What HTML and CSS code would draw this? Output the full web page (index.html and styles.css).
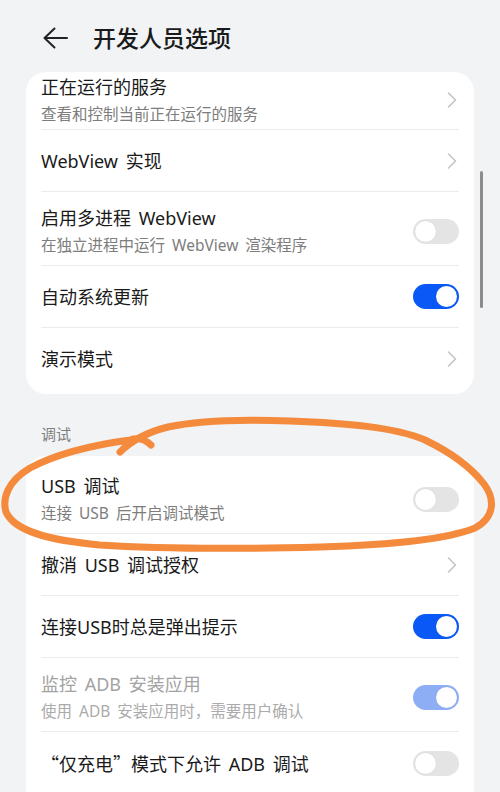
FILE: index.html
```html
<!DOCTYPE html>
<html lang="zh-CN">
<head>
<meta charset="utf-8">
<title>开发人员选项</title>
<link rel="stylesheet" href="styles.css">
</head>
<body>
<div class="page">
  <header class="header">
    <svg class="back" width="26" height="22" viewBox="0 0 26 22"><path d="M2.5 11 H25 M12.5 1.5 L2.5 11 L12.5 20.5" fill="none" stroke="#222" stroke-width="2" stroke-linecap="round" stroke-linejoin="round"/></svg>
    <h1 class="title">开发人员选项</h1>
  </header>

  <section class="card card-top">
    <div class="row row-double row-first">
      <div class="text"><div class="t">正在运行的服务</div><div class="s">查看和控制当前正在运行的服务</div></div>
      <svg class="chev" width="12" height="16" viewBox="0 0 12 16"><path d="M1.5 1 L8.5 8 L1.5 15" fill="none" stroke="#c4c4c4" stroke-width="1.6" stroke-linecap="round" stroke-linejoin="round"/></svg>
    </div>
    <div class="row">
      <div class="text"><div class="t">WebView 实现</div></div>
      <svg class="chev" width="12" height="16" viewBox="0 0 12 16"><path d="M1.5 1 L8.5 8 L1.5 15" fill="none" stroke="#c4c4c4" stroke-width="1.6" stroke-linecap="round" stroke-linejoin="round"/></svg>
    </div>
    <div class="row row-double">
      <div class="text"><div class="t">启用多进程 WebView</div><div class="s">在独立进程中运行 WebView 渲染程序</div></div>
      <span class="toggle"></span>
    </div>
    <div class="row">
      <div class="text"><div class="t">自动系统更新</div></div>
      <span class="toggle on"></span>
    </div>
    <div class="row last">
      <div class="text"><div class="t">演示模式</div></div>
      <svg class="chev" width="12" height="16" viewBox="0 0 12 16"><path d="M1.5 1 L8.5 8 L1.5 15" fill="none" stroke="#c4c4c4" stroke-width="1.6" stroke-linecap="round" stroke-linejoin="round"/></svg>
    </div>
  </section>

  <div class="section-label">调试</div>

  <section class="card card-bottom">
    <div class="row row-double">
      <div class="text"><div class="t">USB 调试</div><div class="s">连接 USB 后开启调试模式</div></div>
      <span class="toggle"></span>
    </div>
    <div class="row">
      <div class="text"><div class="t">撤消 USB 调试授权</div></div>
      <svg class="chev" width="12" height="16" viewBox="0 0 12 16"><path d="M1.5 1 L8.5 8 L1.5 15" fill="none" stroke="#c4c4c4" stroke-width="1.6" stroke-linecap="round" stroke-linejoin="round"/></svg>
    </div>
    <div class="row">
      <div class="text"><div class="t">连接USB时总是弹出提示</div></div>
      <span class="toggle on"></span>
    </div>
    <div class="row row-double disabled">
      <div class="text"><div class="t">监控 ADB 安装应用</div><div class="s">使用 ADB 安装应用时，需要用户确认</div></div>
      <span class="toggle on dim"></span>
    </div>
    <div class="row last">
      <div class="text"><div class="t"><span class="cjk">“仅充电”</span>模式下允许 ADB 调试</div></div>
      <span class="toggle"></span>
    </div>
  </section>

  <div class="scrollbar"></div>

  <svg class="annotation" width="500" height="792" viewBox="0 0 500 792">
    <path d="M151 445 C146 440 138 437 130 440 C100 444 60 452 30 468 C8 481 2 498 6 512 C14 530 45 540 100 545 C160 549 240 549 320 547 C390 545 445 540 475 528 C494 518 496 500 484 484 C470 466 450 452 425 440 C395 427 345 423 290 421 C240 419 195 421 168 427 C148 432 132 440 120 452" fill="none" stroke="#f48a3c" stroke-width="7" stroke-linecap="round" stroke-linejoin="round"/>
  </svg>
</div>
</body>
</html>
```

FILE: styles.css
```css
html, body {
  margin: 0;
  padding: 0;
}

body {
  background: #f1f3f5;
  font-family: "Noto Sans", "Noto Sans CJK SC", sans-serif;
  color: #1a1a1a;
  width: 500px;
  height: 792px;
  overflow: hidden;
}

.page {
  position: relative;
  width: 500px;
  height: 792px;
  overflow: hidden;
}

.cjk {
  font-family: "Noto Sans CJK SC", sans-serif;
}

.header {
  height: 72px;
  box-sizing: border-box;
  padding: 3px 0 0 42px;
  display: flex;
  align-items: center;
  gap: 25px;
}

.back {
  display: block;
  flex: none;
}

.title {
  margin: 0;
  font-size: 23px;
  font-weight: 500;
  line-height: 30px;
  color: #1a1a1a;
}

.card {
  background: #ffffff;
  margin: 0 26px;
  border-radius: 20px;
  padding: 0 15px;
}

.card-top {
  padding-bottom: 4px;
}

.card-bottom {
  padding-top: 4px;
  border-radius: 20px 20px 0 0;
}

.row {
  display: flex;
  align-items: center;
  justify-content: space-between;
  min-height: 61px;
  border-bottom: 1px solid #ebebeb;
  box-sizing: content-box;
}

.row.last {
  border-bottom: none;
  min-height: 62px;
}

.row-double {
  min-height: 0;
  padding: 14px 0 9px;
}

.row-first {
  padding: 3px 0 4px;
}

.text {
  display: flex;
  flex-direction: column;
  gap: 4px;
}

.t {
  font-size: 18px;
  line-height: 24px;
  color: #1a1a1a;
  word-spacing: 3px;
}

.s {
  font-size: 15.5px;
  line-height: 22px;
  color: #7d7d7d;
  word-spacing: 3px;
}

.disabled .t {
  color: #a3a3a3;
}

.disabled .s {
  color: #ababab;
}

.chev {
  display: block;
  flex: none;
}

.toggle {
  position: relative;
  flex: none;
  width: 46px;
  height: 25px;
  border-radius: 13px;
  background: #e4e4e4;
}

.toggle::after {
  content: "";
  position: absolute;
  top: 2px;
  left: 2px;
  width: 21px;
  height: 21px;
  border-radius: 50%;
  background: #ffffff;
  box-shadow: 0 0 1px rgba(0, 0, 0, 0.15);
}

.toggle.on {
  background: #0a59f7;
}

.toggle.on::after {
  left: 23px;
}

.toggle.on.dim {
  background: #8daef5;
}

.section-label {
  margin: 30px 0 12px 41px;
  font-size: 15px;
  line-height: 20px;
  color: #7f7f7f;
}

.scrollbar {
  position: absolute;
  left: 480px;
  top: 171px;
  width: 3px;
  height: 137px;
  border-radius: 2px;
  background: #8c8c8c;
}

.annotation {
  position: absolute;
  left: 0;
  top: 0;
  pointer-events: none;
}
```
